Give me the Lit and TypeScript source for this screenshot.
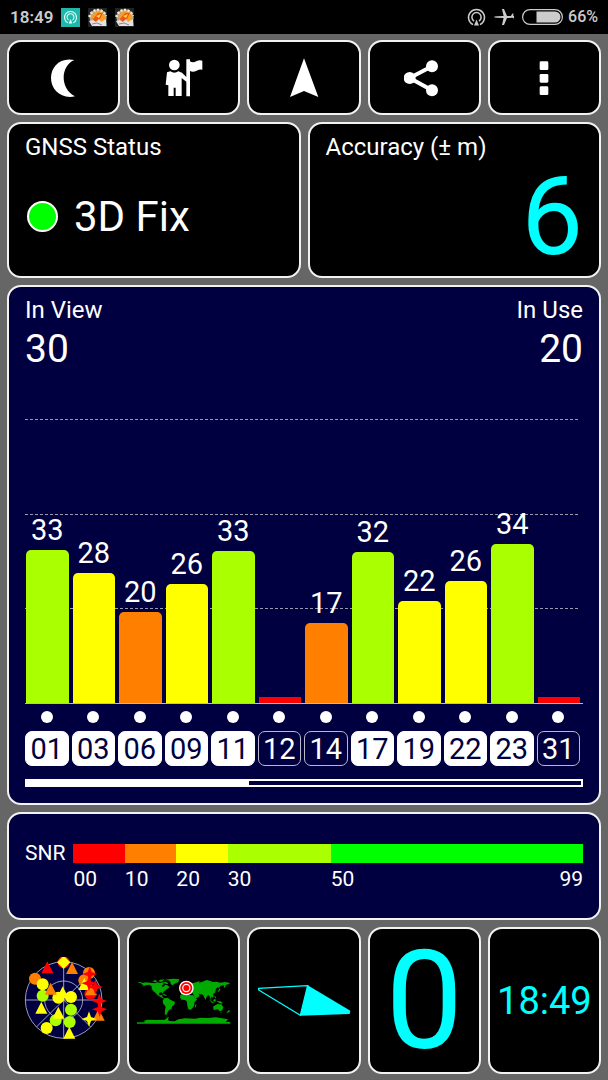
import { LitElement, html, css, svg } from "lit";
import { customElement } from "lit/decorators.js";
import { classMap } from "lit/directives/class-map.js";

interface Satellite {
  prn: string;
  snr: string;
  level: number;
  tone: "red" | "orange" | "yellow" | "lime";
  used: boolean;
}

const FULL_SCALE = 60;

const SATELLITES: Satellite[] = [
  { prn: "01", snr: "33", level: 32.3, tone: "lime", used: true },
  { prn: "03", snr: "28", level: 27.5, tone: "yellow", used: true },
  { prn: "06", snr: "20", level: 19.2, tone: "orange", used: true },
  { prn: "09", snr: "26", level: 25.2, tone: "yellow", used: true },
  { prn: "11", snr: "33", level: 32.2, tone: "lime", used: true },
  { prn: "12", snr: "", level: 1.3, tone: "red", used: false },
  { prn: "14", snr: "17", level: 16.9, tone: "orange", used: false },
  { prn: "17", snr: "32", level: 31.8, tone: "lime", used: true },
  { prn: "19", snr: "22", level: 21.6, tone: "yellow", used: true },
  { prn: "22", snr: "26", level: 25.7, tone: "yellow", used: true },
  { prn: "23", snr: "34", level: 33.5, tone: "lime", used: true },
  { prn: "31", snr: "", level: 1.3, tone: "red", used: false },
];

const beacon = svg`
  <path d="M6 16.6A8 8 0 1 1 13 16.6" fill="none" stroke="currentColor" stroke-width="1.5"/>
  <path d="M7 13A4.6 4.6 0 1 1 12 13" fill="none" stroke="currentColor" stroke-width="1.5"/>
  <path d="M9.5 11.5L12 17.5H7Z" fill="currentColor"/>`;

@customElement("status-strip")
class StatusStrip extends LitElement {
  static styles = css`
    :host {
      display: flex;
      align-items: center;
      height: 34px;
      padding: 0 10px;
      background: #000;
      color: #ccc;
      font-size: 16px;
      line-height: 20px;
    }
    .group { display: flex; align-items: center; gap: 8px; }
    .end { margin-left: auto; }
    .clock { font-size: 17px; font-weight: 600; }
    .charge { font-weight: 500; }
    .pair { display: flex; align-items: center; gap: 5px; }
    svg { display: block; }
  `;

  private notice() {
    return html`<svg width="19" height="19" viewBox="0 0 19 19" aria-hidden="true">
      <rect width="19" height="19" fill="#222"/>
      <circle cx="10" cy="9.5" r="8.6" fill="#b8a48c"/>
      <path d="M1.5 9A8.5 8.5 0 0 1 18 8" fill="none" stroke="#f2e8c8" stroke-width="2.6" stroke-dasharray="2 1.6"/>
      <circle cx="10.5" cy="10" r="6.4" fill="#f9a01b"/>
      <path d="M5 11L10 5L15 5L12 11L6 15Z" fill="#f0531c"/>
      <path d="M8 8L13 6L11 10Z" fill="#ffd34d"/>
      <path d="M1 13L5 12L8 14L11 11L13 14L18 11L18.5 18H4Z" fill="#e4e0e4"/>
      <path d="M4 16L9 15L14 17" stroke="#8d8793" fill="none"/>
    </svg>`;
  }

  render() {
    return html`
      <div class="group">
        <span class="clock">18:49</span>
        <svg width="19" height="19" viewBox="0 0 19 19" aria-hidden="true">
          <rect width="19" height="19" fill="#22b5a9"/>
          <g color="#d9fffa" transform="translate(2.4 2.4) scale(.75)">${beacon}</g>
        </svg>
        ${this.notice()} ${this.notice()}
      </div>
      <div class="group end">
        <svg width="19" height="19" viewBox="0 0 19 19" aria-hidden="true">${beacon}</svg>
        <svg width="20" height="18" viewBox="0 0 20 18" aria-hidden="true">
          <path fill="currentColor" d="M20 7.6V10.4L18.5 9.8L13 10L10 17H8L9.6 10L3 9.8Q0 9.6 0 9Q0 8.4 3 8.2L9.6 8L8 1H10L13 8H16.8L18.5 5.5H19.6L19 8Z"/>
        </svg>
        <span class="pair">
          <svg width="41" height="16" viewBox="0 0 41 16" aria-hidden="true">
            <rect x=".6" y=".6" width="39.8" height="14.8" rx="7.4" fill="none" stroke="currentColor" stroke-width="1.2"/>
            <path d="M14.5 2.5H33A5.5 5.5 0 0 1 33 13.5H14.5Z" fill="currentColor"/>
          </svg>
          <span class="charge">66%</span>
        </span>
      </div>`;
  }
}

@customElement("snr-chart")
class SnrChart extends LitElement {
  static styles = css`
    :host { display: flex; flex-direction: column; flex: 1; }
    .plot { position: relative; flex: 1; min-height: 200px; border-bottom: 1px solid #b9b9c8; }
    .lines {
      position: absolute;
      inset: 0 3px 0 0;
      display: grid;
      grid-template-rows: repeat(3, 1fr);
    }
    .line {
      height: 1px;
      background: repeating-linear-gradient(90deg, #9a9aae 0 3px, transparent 3px 5px);
    }
    .columns { position: absolute; inset: 0; display: grid; grid-template-columns: repeat(12, 1fr); }
    .column {
      display: flex;
      flex-direction: column;
      justify-content: flex-end;
      padding: 0 3px 0 1px;
      text-align: center;
    }
    .value { font-size: 29px; line-height: 40px; }
    .bar { border-radius: 5px 5px 0 0; }
    .red { background: #f00; border-radius: 0; }
    .orange { background: #ff8000; }
    .yellow { background: #ff0; }
    .lime { background: #af0; }
    .sats { display: grid; grid-template-columns: repeat(12, 1fr); padding-top: 7px; }
    .sat { display: flex; flex-direction: column; gap: 8px; padding-right: 3px; }
    .dot { width: 12px; height: 12px; border-radius: 50%; background: #fff; align-self: center; }
    .prn {
      box-sizing: border-box;
      height: 35px;
      border: 1px solid #b9b9c8;
      border-radius: 7px;
      font-size: 29px;
      line-height: 34px;
      text-align: center;
    }
    .used { background: #fff; border-color: #fff; color: #000040; }
    .track { height: 4px; margin-top: 13px; border: 2px solid #fff; }
    .thumb { height: 4px; background: #fff; }
  `;

  render() {
    return html`
      <div class="plot">
        <div class="lines">
          <div class="line"></div>
          <div class="line"></div>
          <div class="line"></div>
        </div>
        <div class="columns">
          ${SATELLITES.map(
            (s) => html`<div class="column">
              <span class="value">${s.snr}</span>
              <div class="bar ${s.tone}" style="height:${(s.level / FULL_SCALE) * 100}%"></div>
            </div>`
          )}
        </div>
      </div>
      <div class="sats">
        ${SATELLITES.map(
          (s) => html`<div class="sat">
            <span class="dot"></span>
            <span class=${classMap({ prn: true, used: s.used })}>${s.prn}</span>
          </div>`
        )}
      </div>
      <div class="track"><div class="thumb" style="width:${(12 / 30) * 100}%"></div></div>`;
  }
}

const circles: [number, number, string][] = [
  [44, 69, "#ff8000"], [67, 120, "#af0"], [67, 86, "#ff0"], [206, 52, "#ff8000"],
  [192, 74, "#ff8000"], [210, 114, "#f00"], [114, 126, "#ff0"], [152, 124, "#ff0"],
  [152, 162, "#af0"], [148, 199, "#af0"], [106, 194, "#af0"], [79, 217, "#ff0"],
];
const triangles: [number, number, string][] = [
  [81, 36, "#f00"], [155, 38, "#ff8000"], [91, 100, "#ff8000"], [127, 111, "#ff0"],
  [63, 157, "#ff0"], [114, 172, "#ff0"], [147, 232, "#ff0"], [192, 86, "#ff0"],
  [212, 102, "#ff8000"], [235, 178, "#ff8000"],
];
const stars: [number, number, string][] = [
  [208, 55, "#f00"], [206, 83, "#f00"], [225, 94, "#f00"],
  [237, 136, "#f00"], [238, 161, "#f00"], [206, 190, "#ff0"],
];

@customElement("app-root")
class AppRoot extends LitElement {
  static styles = css`
    :host {
      display: flex;
      flex-direction: column;
      min-height: 100vh;
      background: #666;
      color: #fff;
      font-family: Roboto, "Liberation Sans", sans-serif;
    }
    main { display: flex; flex: 1; flex-direction: column; gap: 7px; padding: 6px 7px; }
    .five { display: grid; grid-template-columns: repeat(5, 1fr); gap: 7px; }
    .two { display: grid; grid-template-columns: repeat(2, 1fr); gap: 7px; }
    .card {
      box-sizing: border-box;
      border: 2px solid #f2f2f2;
      border-radius: 14px;
      background: #000;
      color: #fff;
    }
    button { display: grid; place-items: center; min-width: 0; padding: 0; font: inherit; cursor: pointer; }
    .tool { height: 75px; }
    .tile { height: 147px; }
    svg { display: block; }
    .readout { padding: 9px 16px 4px; }
    .label { margin: 0; font-size: 24px; font-weight: 400; line-height: 28px; }
    .body { display: flex; align-items: center; height: 111px; }
    .fix { gap: 16px; padding-left: 2px; font-size: 42px; }
    .lamp {
      box-sizing: border-box;
      width: 31px;
      height: 31px;
      border: 2px solid #fff;
      border-radius: 50%;
      background: #0f0;
    }
    .cyan { color: #0ff; }
    .accuracy { justify-content: flex-end; font-size: 110px; line-height: 111px; }
    .navy { background: #000040; }
    .view { display: flex; flex: 1; flex-direction: column; padding: 9px 16px 16px; }
    .counts { display: flex; justify-content: space-between; margin-bottom: 45px; }
    .count { font-size: 39px; line-height: 50px; }
    .right { text-align: right; }
    .legend {
      display: grid;
      grid-template-columns: auto 1fr;
      column-gap: 8px;
      row-gap: 4px;
      padding: 30px 16px 27px;
      font-size: 21px;
    }
    .name { line-height: 19px; }
    .scale { display: grid; grid-template-columns: 10fr 10fr 10fr 20fr 49fr; grid-column: 2; }
    .ramp { height: 19px; }
    .c0 { background: #f00; }
    .c1 { background: #ff8000; }
    .c2 { background: #ff0; }
    .c3 { background: #af0; }
    .c4 { background: #0f0; }
    .ticks { line-height: 24px; }
    .ends { display: flex; justify-content: space-between; }
    .speed { font-size: 138px; line-height: 140px; }
    .time { font-size: 38px; line-height: 44px; }
  `;

  private tool(label: string, viewBox: string, shape: unknown) {
    return html`<button class="card tool" aria-label=${label}>
      <svg width="40" height="40" viewBox=${viewBox} fill="#fff" aria-hidden="true">${shape}</svg>
    </button>`;
  }

  private sky() {
    return html`<svg width="90" height="88" viewBox="-4 4 270 264" aria-hidden="true">
      <g fill="#000040" stroke="#b9b9d0" stroke-width="2.5">
        <circle cx="130" cy="133" r="115"/>
        <circle cx="130" cy="133" r="57" fill="none"/>
        <path d="M15 133H245M130 18V248M130 133L48 214M130 133L212 52M130 133L211 214"/>
      </g>
      ${circles.map(([x, y, c]) => svg`<circle cx=${x} cy=${y} r="18" fill=${c}/>`)}
      ${triangles.map(([x, y, c]) => svg`<path transform="translate(${x} ${y})" d="M0 -19L18 17H-18Z" fill=${c}/>`)}
      ${stars.map(([x, y, c]) => svg`<path transform="translate(${x} ${y})" d="M0 -23L6 -6L23 0L6 6L0 23L-6 6L-23 0L-6 -6Z" fill=${c}/>`)}
      <circle cx="130" cy="20" r="18" fill="#f00"/>
      <path d="M130 0L150 20L130 40L110 20Z" fill="#ff0"/>
    </svg>`;
  }

  private world() {
    return html`<svg width="100" height="58" viewBox="27 154 300 174" aria-hidden="true">
      <g fill="#0a0">
        <path d="M36 186L46 184L52 187L62 185L76 186L88 188L98 185L106 187L112 184L117 190L110 195L114 200L121 192L127 194L134 200L127 204L121 209L115 213L114 219L110 215L103 216L102 222L107 224L112 222L112 228L118 232L113 233L106 228L97 223L90 215L84 211L80 203L80 197L73 192L62 194L52 198L56 193L49 191L49 188Z"/>
        <path d="M82 182L90 178L97 182L92 185ZM100 181L106 177L118 176L114 181L106 184ZM114 185L122 183L130 188L126 191L118 188ZM112 220L120 221L126 225L119 225Z"/>
        <path d="M116 179L130 176L146 174L163 176L160 184L152 188L142 194L137 190L136 183L130 179Z"/>
        <path d="M117 233L128 231L136 237L150 244L148 252L142 256L139 264L132 268L126 278L125 283L119 281L120 270L122 258L114 248L113 240Z"/>
        <path d="M166 224L172 219L184 220L194 223L205 224L210 232L217 236L209 244L207 256L203 262L196 268L190 265L187 256L186 243L180 238L170 237L165 231ZM211 252L214 249L213 258L209 262Z"/>
        <path d="M167 216L168 209L176 205L172 198L180 197L185 190L194 186L205 187L216 184L224 181L222 186L233 183L245 178L254 180L263 184L275 183L286 186L300 184L316 187L310 191L303 192L300 201L296 200L298 194L287 195L281 202L277 200L272 207L271 215L264 221L266 227L261 232L258 226L257 234L263 240L256 236L253 226L249 223L243 232L243 238L238 231L234 222L226 221L221 219L224 225L217 231L210 234L206 224L203 218L193 217L189 213L181 214L178 218L171 221Z"/>
        <path d="M277 212L282 207L284 201L286 207L281 213ZM252 236L263 244L270 248L260 246ZM264 238L271 234L273 241L267 244ZM275 240L281 242L287 242L294 248L285 248L277 243ZM268 224L272 228L274 234L270 231Z"/>
        <path d="M264 258L273 252L281 249L285 253L288 248L295 260L292 269L285 272L278 266L266 268ZM286 275L290 275L287 278ZM312 268L316 271L309 276L304 276Z"/>
        <path d="M36 305H60L56 301L66 297L94 298L120 297L125 292L132 288L129 296L132 301L149 302L160 296L180 293L210 294L226 291L250 292L272 290L292 293L309 296L302 304H316V309H36Z"/>
      </g>
      <circle cx="184" cy="202" r="22" fill="#fff"/>
      <circle cx="184" cy="202" r="18" fill="#f00"/>
      <circle cx="184" cy="202" r="12.5" fill="#fff"/>
      <circle cx="184" cy="202" r="9" fill="#f00"/>
    </svg>`;
  }

  render() {
    return html`
      <status-strip></status-strip>
      <main>
        <div class="five">
          ${this.tool("Night mode", "131 173 120 120",
            svg`<path d="M222 179C178 170 152 200 152 233C152 268 182 297 224 288C179 266 179 198 222 179Z"/>`)}
          ${this.tool("Waypoints", "491 173 120 120",
            svg`<circle cx="522" cy="194" r="16"/>
              <path d="M500 216L510 213Q522 221 534 213L545 217L558 230V177H569V183Q578 189 589 182Q598 178 606 181V208Q598 206 589 211Q578 217 569 212V288H558V244L544 233V287H526V262H520V287H504V255L496 253Z"/>`)}
          ${this.tool("Navigate", "852 173 120 120",
            svg`<path d="M912 174L870 290L912 272L955 290Z"/>`)}
          ${this.tool("Share", "301 173 120 120",
            svg`<path d="M385 198L318 233L385 270" fill="none" stroke="#fff" stroke-width="12"/>
              <circle cx="318" cy="233" r="18"/><circle cx="385" cy="198" r="18"/><circle cx="385" cy="270" r="18"/>`)}
          ${this.tool("More options", "661 173 120 120",
            svg`<rect x="708" y="183" width="26" height="26" rx="4"/><rect x="708" y="221" width="26" height="26" rx="4"/><rect x="708" y="258" width="26" height="26" rx="4"/>`)}
        </div>

        <div class="two">
          <section class="card readout">
            <h2 class="label">GNSS Status</h2>
            <div class="body fix"><span class="lamp"></span><span>3D Fix</span></div>
          </section>
          <section class="card readout">
            <h2 class="label">Accuracy (± m)</h2>
            <div class="body accuracy cyan">6</div>
          </section>
        </div>

        <section class="card navy view">
          <div class="counts">
            <div>
              <h2 class="label">In View</h2>
              <div class="count">30</div>
            </div>
            <div class="right">
              <h2 class="label">In Use</h2>
              <div class="count">20</div>
            </div>
          </div>
          <snr-chart></snr-chart>
        </section>

        <section class="card navy legend">
          <span class="name">SNR</span>
          <div class="scale ramp">
            <span class="c0"></span><span class="c1"></span><span class="c2"></span><span class="c3"></span><span class="c4"></span>
          </div>
          <div class="scale ticks">
            <span>00</span><span>10</span><span>20</span><span>30</span>
            <span class="ends"><span>50</span><span>99</span></span>
          </div>
        </section>

        <div class="five">
          <button class="card tile" aria-label="Sky view">${this.sky()}</button>
          <button class="card tile" aria-label="World map">${this.world()}</button>
          <button class="card tile" aria-label="Compass">
            <svg width="100" height="40" viewBox="387 181 300 120" aria-hidden="true">
              <path d="M548 195L401 203V208L526 284Z" fill="none" stroke="#0ff" stroke-width="4"/>
              <path d="M548 194L676 270L674 280L526 285Z" fill="#0ff"/>
            </svg>
          </button>
          <button class="card tile cyan"><span class="speed">0</span></button>
          <button class="card tile cyan"><span class="time">18:49</span></button>
        </div>
      </main>`;
  }
}
